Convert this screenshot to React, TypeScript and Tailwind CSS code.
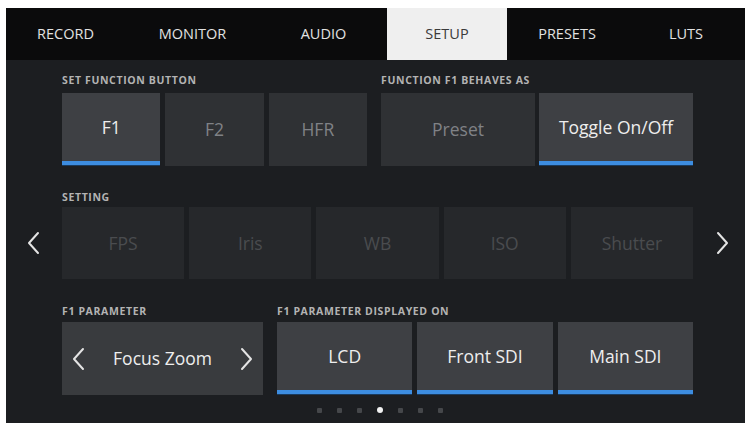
import React from "react";

const font = { fontFamily: '"Open Sans", "Noto Sans", sans-serif' };

function Btn({
  label,
  active,
  selected,
  dim,
  className = "",
}: {
  label: string;
  active?: boolean;
  selected?: boolean;
  dim?: boolean;
  className?: string;
}) {
  const bg = dim ? "bg-[#26282b]" : selected ? "bg-[#3e4044]" : "bg-[#2f3134]";
  const fg = dim ? "text-[#4a4c4f]" : selected ? "text-[#eeeeee]" : "text-[#808286]";
  return (
    <div className={`flex flex-col ${bg} ${className}`}>
      <div className={`flex-1 flex items-center justify-center text-[17.5px] ${fg}`}>{label}</div>
      {active ? <div className="h-[5px] bg-[#3d8de0] border-b border-[#1a3a5c]" /> : null}
    </div>
  );
}

function Label({ children }: { children: React.ReactNode }) {
  return (
    <div className="h-[12px] leading-[12px] text-[10.5px] font-bold tracking-[0.06em] text-[#b3b3b3] uppercase whitespace-nowrap">
      {children}
    </div>
  );
}

function Chevron({ dir }: { dir: "l" | "r" }) {
  return (
    <svg width="14" height="24" viewBox="0 0 14 24" fill="none">
      <polyline
        points={dir === "l" ? "11,2 2,12 11,22" : "3,2 12,12 3,22"}
        stroke="#e4e4e4"
        strokeWidth="2"
        strokeLinecap="round"
        strokeLinejoin="round"
      />
    </svg>
  );
}

export default function App() {
  const tabs = [
    { t: "RECORD", w: "w-[119px]" },
    { t: "MONITOR", w: "w-[135px]" },
    { t: "AUDIO", w: "w-[127px]" },
    { t: "SETUP", w: "w-[120px]" },
    { t: "PRESETS", w: "w-[120px]" },
    { t: "LUTS", w: "w-[118px]" },
  ];
  return (
    <div className="w-[751px] h-[423px] bg-white pl-[6px] pr-[6px] pt-[8px] overflow-hidden" style={font}>
      <div className="w-[739px] h-[415px] flex flex-col bg-[#1c1e21]">
        <div className="h-[52px] flex bg-[#0b0b0c]">
          {tabs.map((x) => (
            <div
              key={x.t}
              className={`${x.w} flex items-center justify-center text-[14.5px] ${
                x.t === "SETUP" ? "bg-[#efefef] text-[#3a3a3a]" : "text-[#e2e2e2]"
              }`}
            >
              {x.t}
            </div>
          ))}
        </div>

        <div className="flex flex-col pt-[14px]">
          {/* Row 1 */}
          <div className="flex pl-[56px] pr-[52px] gap-[14px]">
            <div className="w-[305px] flex flex-col">
              <Label>Set Function Button</Label>
              <div className="mt-[7px] h-[73px] grid grid-cols-3 gap-[5px]">
                <Btn label="F1" selected active />
                <Btn label="F2" />
                <Btn label="HFR" />
              </div>
            </div>
            <div className="flex-1 flex flex-col">
              <Label>Function F1 Behaves As</Label>
              <div className="mt-[7px] h-[73px] grid grid-cols-2 gap-[4px]">
                <Btn label="Preset" />
                <Btn label="Toggle On/Off" selected active />
              </div>
            </div>
          </div>

          {/* Row 2 */}
          <div className="mt-[25px] flex">
            <div className="w-[56px] flex flex-col">
              <div className="h-[12px]" />
              <div className="mt-[4px] h-[72px] flex items-center justify-center">
                <Chevron dir="l" />
              </div>
            </div>
            <div className="w-[631px] flex flex-col">
              <Label>Setting</Label>
              <div className="mt-[4px] h-[72px] grid grid-cols-5 gap-[5px]">
                {["FPS", "Iris", "WB", "ISO", "Shutter"].map((s) => (
                  <Btn key={s} label={s} dim />
                ))}
              </div>
            </div>
            <div className="w-[52px] flex flex-col">
              <div className="h-[12px]" />
              <div className="mt-[4px] h-[72px] flex items-center justify-center pl-[6px]">
                <Chevron dir="r" />
              </div>
            </div>
          </div>

          {/* Row 3 */}
          <div className="mt-[26px] flex pl-[56px] pr-[52px] gap-[14px]">
            <div className="w-[201px] flex flex-col">
              <Label>F1 Parameter</Label>
              <div className="mt-[5px] h-[73px] bg-[#393b3e] flex items-center justify-between pl-[10px] pr-[10px]">
                <Chevron dir="l" />
                <span className="text-[17.5px] text-[#eeeeee]">Focus Zoom</span>
                <Chevron dir="r" />
              </div>
            </div>
            <div className="flex-1 flex flex-col">
              <Label>F1 Parameter Displayed On</Label>
              <div className="mt-[5px] h-[73px] grid grid-cols-3 gap-[5px]">
                <Btn label="LCD" selected active />
                <Btn label="Front SDI" selected active />
                <Btn label="Main SDI" selected active />
              </div>
            </div>
          </div>

          {/* Dots */}
          <div className="mt-[12px] h-[6px] flex items-center justify-center gap-[15px] pl-[8px]">
            {[0, 1, 2, 3, 4, 5, 6].map((i) =>
              i === 3 ? (
                <div key={i} className="w-[6px] h-[6px] rounded-full bg-[#f2f2f2]" />
              ) : (
                <div key={i} className="w-[5px] h-[5px] rounded-[1px] bg-[#45474a]" />
              )
            )}
          </div>
        </div>
      </div>
    </div>
  );
}
